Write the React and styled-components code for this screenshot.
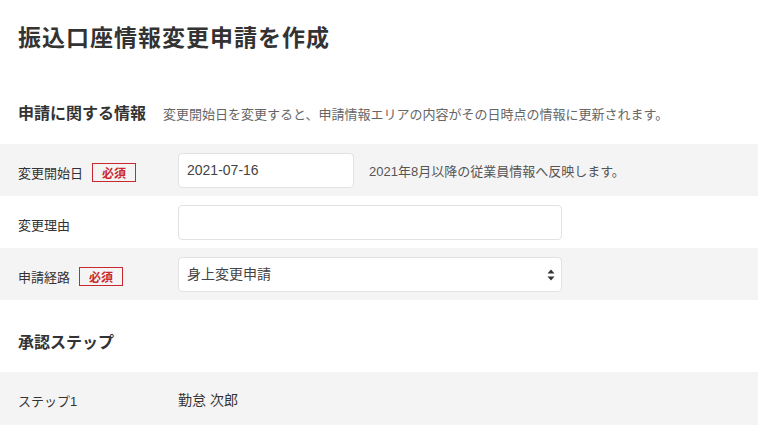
import React from "react"
import styled, { createGlobalStyle } from "styled-components"

const GlobalStyle = createGlobalStyle`
  body {
    margin: 0;
    background: #fff;
    color: #333;
    font-family: "Liberation Sans", "Noto Sans CJK JP", sans-serif;
  }
`

const StyledPage = styled.div`
  width: 758px;
`

const StyledTitle = styled.h1`
  margin: 0;
  padding: 24px 18px;
  font-size: 23px;
  line-height: 28px;
  letter-spacing: 1px;
  font-weight: bold;
  color: #333;
`

const StyledSectionHead = styled.div`
  display: flex;
  align-items: baseline;
  gap: 17px;
  padding: ${({ top }) => top}px 18px ${({ bottom }) => bottom}px;
`

const StyledSectionTitle = styled.h2`
  margin: 0;
  font-size: 16px;
  line-height: 24px;
  font-weight: bold;
  color: #333;
`

const StyledSectionNote = styled.span`
  font-size: 13px;
  color: #666;
`

const StyledRow = styled.div`
  display: flex;
  align-items: center;
  height: ${({ height }) => height || 52}px;
  padding: 0 18px;
  background: ${({ shaded }) => (shaded ? "#f5f4f4" : "#fff")};
`

const StyledLabel = styled.div`
  display: flex;
  align-items: center;
  gap: 9px;
  width: 160px;
  flex-shrink: 0;
  padding-top: 4px;
  font-size: 13px;
  color: #333;
`

const StyledBadge = styled.span`
  display: inline-flex;
  align-items: center;
  justify-content: center;
  box-sizing: border-box;
  width: 44px;
  height: 19px;
  border: 1px solid #c8282e;
  color: #c8282e;
  font-size: 12px;
  font-weight: bold;
`

const StyledInput = styled.input`
  box-sizing: border-box;
  width: ${({ width }) => width}px;
  height: 35px;
  padding: 0 8px;
  border: 1px solid #e2e2e2;
  border-radius: 4px;
  background: #fff;
  font-family: inherit;
  font-size: 14px;
  color: #444;
  outline: none;
`

const StyledSelectWrap = styled.div`
  position: relative;
  width: 384px;
`

const StyledSelect = styled.select`
  box-sizing: border-box;
  width: 100%;
  height: 35px;
  padding: 0 8px;
  border: 1px solid #e2e2e2;
  border-radius: 4px;
  background: #fff;
  appearance: none;
  font-family: inherit;
  font-size: 14px;
  color: #444;
  outline: none;
`

const StyledArrows = styled.svg`
  position: absolute;
  right: 7px;
  top: 12px;
  pointer-events: none;
`

const StyledHint = styled.span`
  margin-left: 15px;
  font-size: 13px;
  color: #555;
`

const StyledValue = styled.span`
  font-size: 14px;
  color: #333;
`

const Required = () => <StyledBadge>必須</StyledBadge>

const App = () => (
  <StyledPage>
    <GlobalStyle />
    <StyledTitle>振込口座情報変更申請を作成</StyledTitle>

    <StyledSectionHead top={26} bottom={18}>
      <StyledSectionTitle>申請に関する情報</StyledSectionTitle>
      <StyledSectionNote>
        変更開始日を変更すると、申請情報エリアの内容がその日時点の情報に更新されます。
      </StyledSectionNote>
    </StyledSectionHead>

    <StyledRow shaded>
      <StyledLabel>
        変更開始日
        <Required />
      </StyledLabel>
      <StyledInput width={176} defaultValue="2021-07-16" />
      <StyledHint>2021年8月以降の従業員情報へ反映します。</StyledHint>
    </StyledRow>

    <StyledRow>
      <StyledLabel>変更理由</StyledLabel>
      <StyledInput width={384} />
    </StyledRow>

    <StyledRow shaded>
      <StyledLabel>
        申請経路
        <Required />
      </StyledLabel>
      <StyledSelectWrap>
        <StyledSelect defaultValue="self">
          <option value="self">身上変更申請</option>
        </StyledSelect>
        <StyledArrows width="8" height="12" viewBox="0 0 8 12">
          <path d="M4 0.5 L7.5 4.5 H0.5 Z" fill="#333" />
          <path d="M4 11.5 L7.5 7.5 H0.5 Z" fill="#333" />
        </StyledArrows>
      </StyledSelectWrap>
    </StyledRow>

    <StyledSectionHead top={31} bottom={17}>
      <StyledSectionTitle>承認ステップ</StyledSectionTitle>
    </StyledSectionHead>

    <StyledRow shaded height={53}>
      <StyledLabel>ステップ1</StyledLabel>
      <StyledValue>勤怠 次郎</StyledValue>
    </StyledRow>
  </StyledPage>
)

export default App
